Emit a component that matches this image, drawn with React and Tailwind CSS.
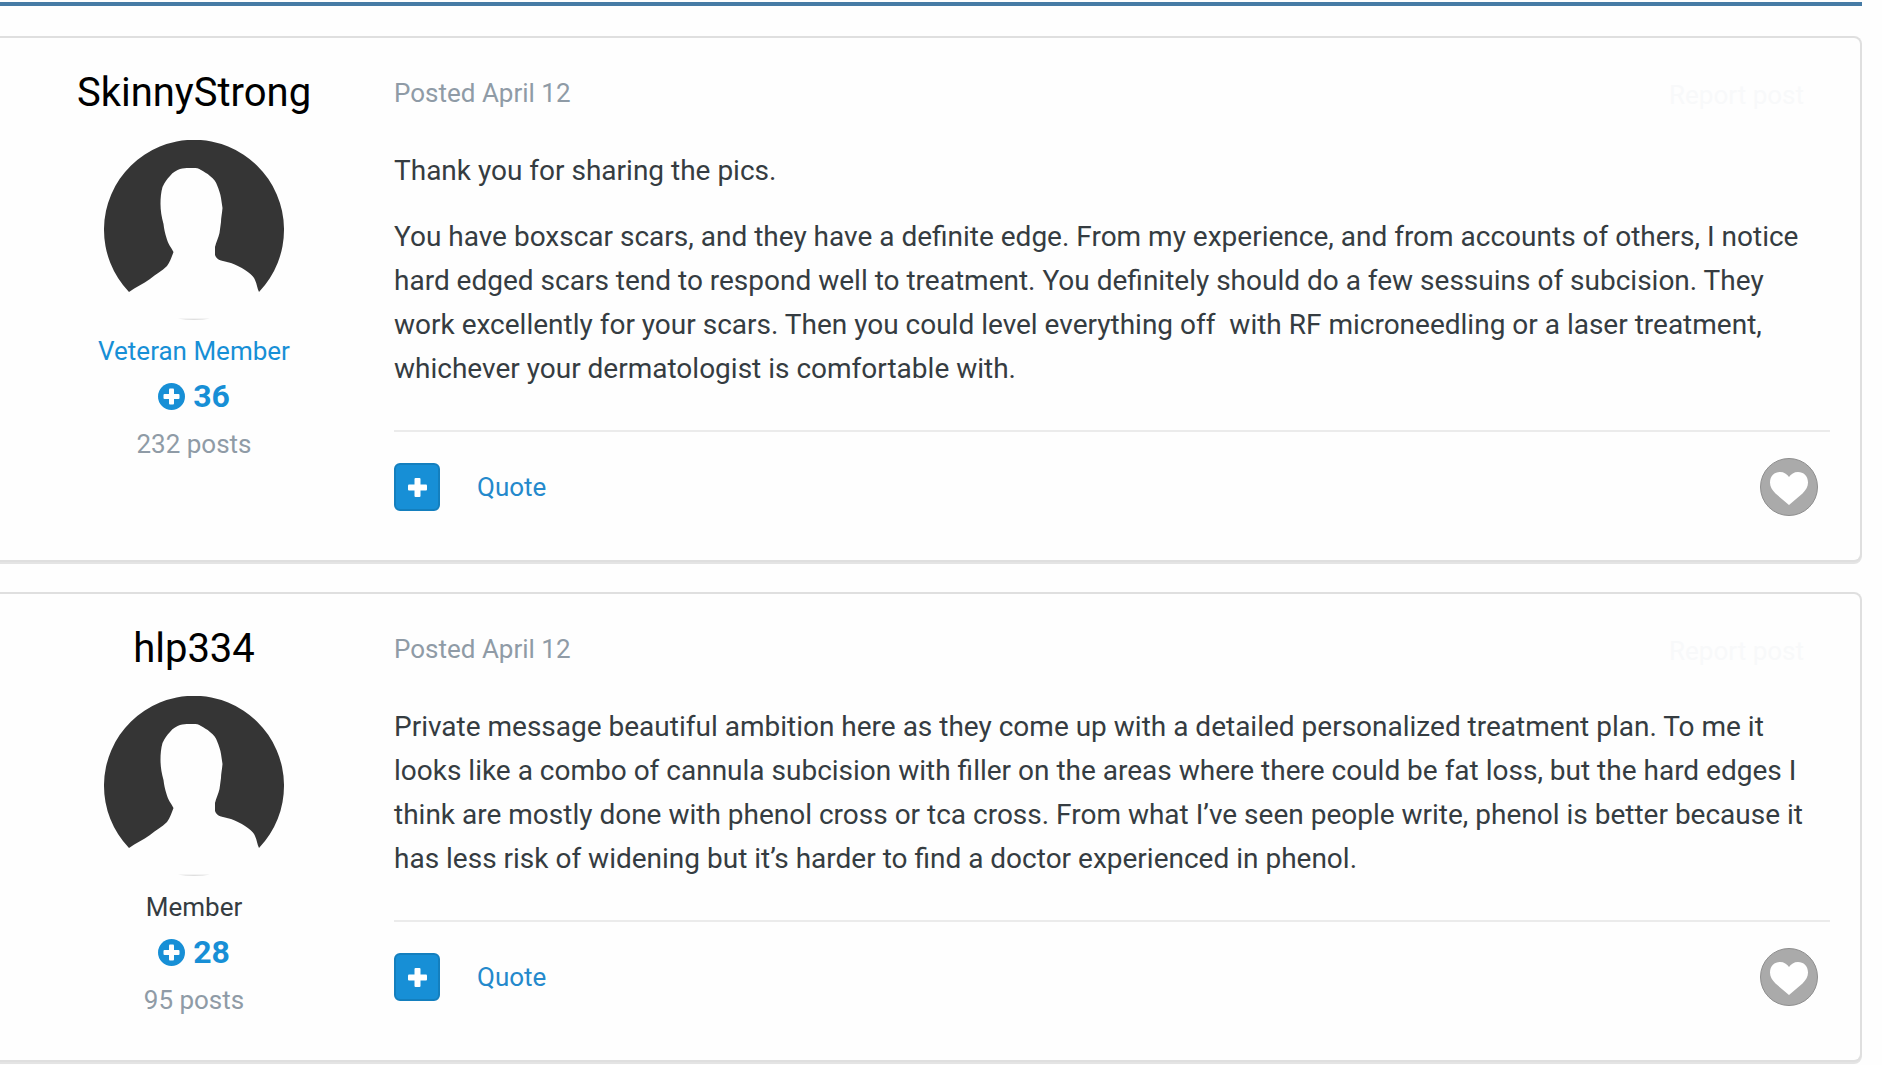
const posts = [
  {
    author: "SkinnyStrong",
    rank: "Veteran Member",
    veteran: true,
    reputation: 36,
    count: "232 posts",
    date: "Posted April 12",
    paragraphs: [
      "Thank you for sharing the pics.",
      "You have boxscar scars, and they have a definite edge. From my experience, and from accounts of others, I notice hard edged scars tend to respond well to treatment. You definitely should do a few sessuins of subcision. They work excellently for your scars. Then you could level everything off \u00a0with RF microneedling or a laser treatment, whichever your dermatologist is comfortable with.",
    ],
  },
  {
    author: "hlp334",
    rank: "Member",
    veteran: false,
    reputation: 28,
    count: "95 posts",
    date: "Posted April 12",
    paragraphs: [
      "Private message beautiful ambition here as they come up with a detailed personalized treatment plan. To me it looks like a combo of cannula subcision with filler on the areas where there could be fat loss, but the hard edges I think are mostly done with phenol cross or tca cross. From what I’ve seen people write, phenol is better because it has less risk of widening but it’s harder to find a doctor experienced in phenol.",
    ],
  },
];

function Avatar() {
  return (
    <svg viewBox="0 0 180 180" className="mt-[23px] size-[180px]" role="img" aria-label="Member avatar">
      <path
        fill="#353535"
        d="M85 28C90 28 94 27.500 97 30C100 32 103 33 106 36C110 39 112 42 113 45C115 50 116.500 54 117 58L118.500 68C118 74 117 78 117 82L115.500 93C114.500 98 112 102 111 107V115C112 118 114 119.500 117 120.500L127 123C132 125 137 127 141 130C146 133 150 137 151 140C153 144 153 148 155 152A90 90 0 1 0 25 152C32 147 39 144 46 139C52 134 58 131 63 126C66 122 68 116 69.500 112C67 107 64 104 62.500 98C61 93 60 89 59.500 84C57.500 77 56.500 70 56.500 64C56.500 58 57 52 58.500 47C61 42 63 39 66 36C69 32 73 30 76 29C79 28 82 28 85 28Z"
      />
      <path fill="#d4d4d4" d="M74 178.700H106Q90 181 74 178.700Z" />
    </svg>
  );
}

function PlusCircle() {
  return (
    <svg viewBox="0 0 27 27" className="size-[27px]" aria-hidden="true">
      <circle cx="13.500" cy="13.500" r="13.500" fill="#178fd6" />
      <rect x="5.500" y="11" width="16" height="5" rx="1" fill="#fefefe" />
      <rect x="11" y="5.500" width="5" height="16" rx="1" fill="#fefefe" />
    </svg>
  );
}

function Heart() {
  return (
    <svg viewBox="0 0 58 58" className="size-[58px]" aria-hidden="true">
      <circle cx="29" cy="29" r="28.500" fill="#aaaaaa" stroke="#8e8e8e" />
      <path
        fill="#ffffff"
        d="M29 47L15.500 35.500C12 32 10 28.500 10 24.500C10 18 14.500 14 20 14C24 14 27 16 29 19C31 16 34 14 38 14C43.500 14 48 18 48 24.500C48 28.500 46 32 42.500 35.500Z"
      />
    </svg>
  );
}

function Post({ post }) {
  return (
    <article className="flex rounded-r-lg border-2 border-l-0 border-[#dfdfdf] bg-[#fefefe] pt-[31px] pb-10 shadow-[0_2px_0_#e4e4e4]">
      <aside className="flex w-[388px] shrink-0 flex-col items-center text-[26px] leading-10">
        <h3 className="text-[40px] leading-[48px] text-black">{post.author}</h3>
        <Avatar />
        <p className={post.veteran ? "mt-[11px] text-[#178fd6]" : "mt-[11px] text-[#353c41]"}>{post.rank}</p>
        <p className="mt-[3px] flex items-center gap-2 text-[32px] leading-[44px] font-bold text-[#178fd6]">
          <PlusCircle />
          {post.reputation}
        </p>
        <p className="mt-1.5 text-[#8f9ba6]">{post.count}</p>
      </aside>
      <div className="min-w-0 flex-1 pr-[30px] pl-1.5">
        <header className="flex h-12 items-center justify-between text-[26px] text-[#8f9ba6]">
          <time>{post.date}</time>
          <a href="#report" className="pt-1 pr-[26px] text-[#f8f9fa]">Report post</a>
        </header>
        <div className="mt-8 flex flex-col gap-[22px] text-[28px] leading-[44px] text-[#353c41]">
          {post.paragraphs.map((text) => (
            <p key={text}>{text}</p>
          ))}
        </div>
        <footer className="mt-[39px] flex items-center border-t-2 border-[#ebebeb] pt-[23px] pb-px">
          <button
            type="button"
            aria-label="Multi-quote"
            className="flex h-12 w-[46px] items-center justify-center rounded-md border-2 border-[#147fbe] bg-[#178fd6]"
          >
            <svg viewBox="0 0 19 19" className="size-[19px]" fill="#ffffff" aria-hidden="true">
              <rect y="6.500" width="19" height="6" rx="1" />
              <rect x="6.500" width="6" height="19" rx="1" />
            </svg>
          </button>
          <a href="#quote" className="ml-[37px] text-[26px] leading-[64px] text-[#2489cc]">Quote</a>
          <button type="button" aria-label="Like this post" className="mr-3 ml-auto">
            <Heart />
          </button>
        </footer>
      </div>
    </article>
  );
}

export default function App() {
  return (
    <main className="min-h-screen bg-[#fefefe] pt-0.5 pr-5 font-[Roboto,sans-serif]">
      <div className="h-1 bg-[#467ba5]" />
      <div className="mt-[30px] flex flex-col gap-[30px]">
        {posts.map((post) => (
          <Post key={post.author} post={post} />
        ))}
      </div>
    </main>
  );
}
